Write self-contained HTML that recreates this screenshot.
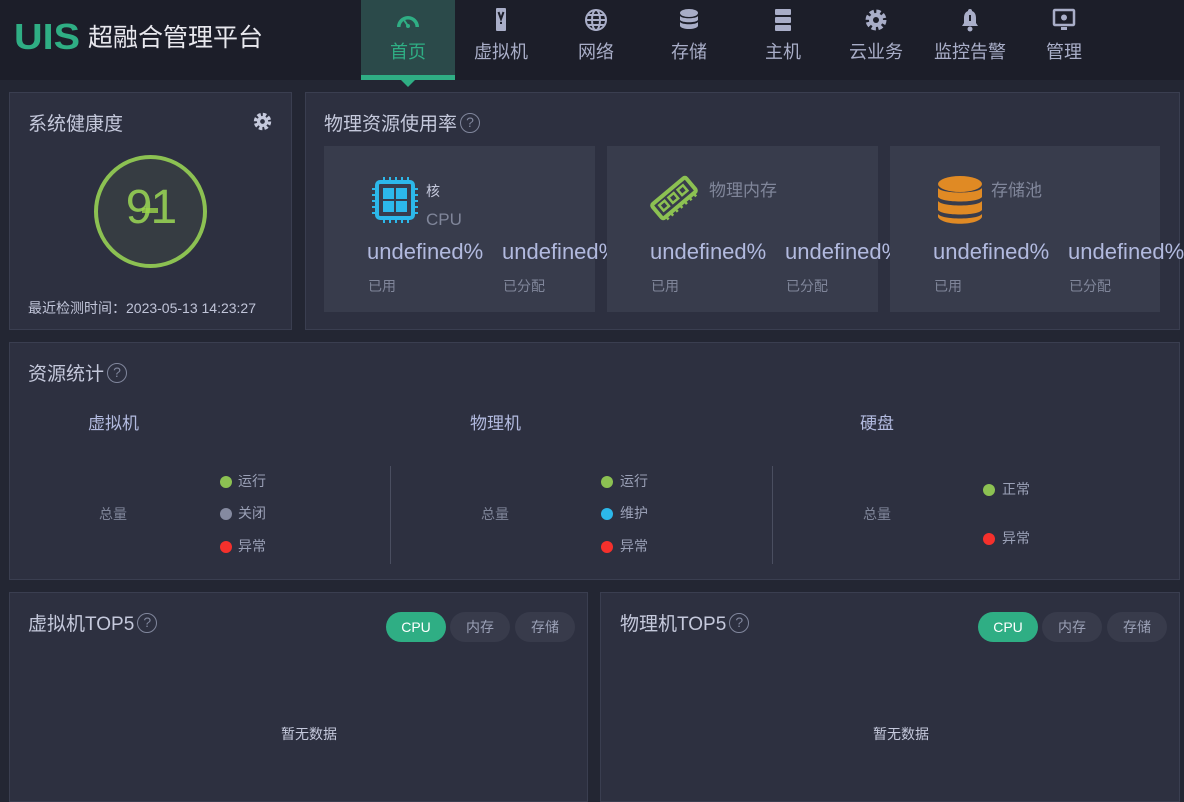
<!DOCTYPE html>
<html><head><meta charset="utf-8"><style>
*{margin:0;padding:0;box-sizing:border-box}
body{width:1184px;height:790px;overflow:hidden;background:#232633;font-family:"Liberation Sans","Noto Sans CJK SC",sans-serif;position:relative;color:#c8cbe0}
.a{position:absolute}
.hdr{left:0;top:0;width:1184px;height:80px;background:#1c1e29}
.nav{top:0;width:94px;height:80px;text-align:center;color:#a9aec8;font-size:18px}
.nav .ic{position:absolute;top:8px;left:35px;width:24px;height:24px}
.nav .t{position:absolute;top:38px;width:100%;left:0}
.panel{background:#2d3040;border:1px solid #3a3e50}
.card{background:#383c4c}
.ttl{font-size:19px;color:#c5c9dc}
.q{display:inline-block;width:20px;height:20px;border:1.5px solid #80869c;border-radius:50%;font-size:14px;line-height:17px;text-align:center;color:#80869c;vertical-align:3px;margin-left:3px}
.big{font-size:22px;color:#b2badf;white-space:nowrap}
.sm{font-size:14px;color:#80869a}
.dot{width:12px;height:12px;border-radius:50%}
.lg{font-size:14px;color:#9aa0b6}
.btn{height:30px;border-radius:15px;font-size:14px;line-height:30px;text-align:center;background:#383b4b;color:#9aa0b6;width:60px}
.btn.on{background:#2fae84;color:#fff}
</style></head><body>
<div class="a hdr"></div>
<div class="a" style="left:14px;top:16px;font-size:36px;font-weight:bold;color:#2fae84;letter-spacing:0px;transform:scaleX(1.1);transform-origin:left">UIS</div>
<div class="a" style="left:88px;top:18px;font-size:25px;color:#e8e8ee">超融合管理平台</div>

<div class="a" style="left:361px;top:0;width:94px;height:80px;background:#2b4a4a"></div>
<div class="a" style="left:361px;top:75px;width:94px;height:5px;background:#2fae84"></div>
<div class="a" style="left:401px;top:80px;width:0;height:0;border-left:7px solid transparent;border-right:7px solid transparent;border-top:7px solid #2fae84"></div>

<div class="a nav" style="left:361px;color:#2fae84"><svg class="ic" viewBox="0 0 24 24"><path d="M1 19a11 11 0 0 1 22 0h-3.5a7.5 7.5 0 0 0-15 0z" fill="#2fae84"/><path d="M12 18l-4-6" stroke="#2fae84" stroke-width="2"/><circle cx="12" cy="18" r="2" fill="#2fae84"/></svg><div class="t">首页</div></div>
<div class="a nav" style="left:454px"><svg class="ic" viewBox="0 0 24 24"><rect x="7" y="0" width="10" height="23" rx="1" fill="#a9aec8"/><path d="M9.5 4l2.5 7 2.5-7" stroke="#1c1e29" stroke-width="2" fill="none"/><rect x="11" y="14" width="2" height="2" fill="#1c1e29"/></svg><div class="t">虚拟机</div></div>
<div class="a nav" style="left:549px"><svg class="ic" viewBox="0 0 24 24" fill="none" stroke="#a9aec8" stroke-width="2"><circle cx="12" cy="12" r="10"/><ellipse cx="12" cy="12" rx="4" ry="10"/><path d="M2 12h20M4 7h16M4 17h16"/></svg><div class="t">网络</div></div>
<div class="a nav" style="left:642px"><svg class="ic" viewBox="0 0 24 24" fill="#a9aec8"><ellipse cx="12" cy="5" rx="9" ry="4"/><path d="M3 8c2 3 16 3 18 0v4c-2 3-16 3-18 0zM3 14c2 3 16 3 18 0v4c-2 4-16 4-18 0z"/></svg><div class="t">存储</div></div>
<div class="a nav" style="left:736px"><svg class="ic" viewBox="0 0 24 24" fill="#a9aec8"><rect x="4" y="1" width="16" height="6" rx="1"/><rect x="4" y="9" width="16" height="6" rx="1"/><rect x="4" y="17" width="16" height="6" rx="1"/></svg><div class="t">主机</div></div>
<div class="a nav" style="left:829px"><svg class="ic" viewBox="0 0 24 24"><circle cx="12" cy="12" r="8" fill="none" stroke="#a9aec8" stroke-width="5" stroke-dasharray="4 2.3"/><circle cx="12" cy="12" r="7" fill="#a9aec8"/><circle cx="12" cy="12" r="3" fill="#1c1e29"/></svg><div class="t">云业务</div></div>
<div class="a nav" style="left:923px"><svg class="ic" viewBox="0 0 24 24" fill="#a9aec8"><path d="M12 1a2 2 0 0 1 2 2c3 1 4 4 4 7v5l2 3H4l2-3v-5c0-3 1-6 4-7a2 2 0 0 1 2-2z"/><circle cx="12" cy="21" r="2.5"/><rect x="11" y="7" width="2" height="6" fill="#1c1e29"/></svg><div class="t">监控告警</div></div>
<div class="a nav" style="left:1017px"><svg class="ic" viewBox="0 0 24 24"><rect x="2" y="2" width="20" height="15" rx="1" fill="none" stroke="#a9aec8" stroke-width="2.5"/><circle cx="12" cy="9.5" r="3" fill="#a9aec8"/><rect x="9" y="19" width="6" height="3" fill="#a9aec8"/></svg><div class="t">管理</div></div>

<!-- health -->
<div class="a panel" style="left:9px;top:92px;width:283px;height:238px"></div>
<div class="a ttl" style="left:28px;top:109px">系统健康度</div>
<svg class="a" style="left:253px;top:112px" width="19" height="19" viewBox="0 0 24 24"><circle cx="12" cy="12" r="8" fill="none" stroke="#c5c9dc" stroke-width="6" stroke-dasharray="4 2.3"/><circle cx="12" cy="12" r="7" fill="#c5c9dc"/><circle cx="12" cy="12" r="3" fill="#2d3040"/></svg>
<div class="a" style="left:94px;top:155px;width:113px;height:113px;border-radius:50%;border:4px solid #8cc152;background:#363c42"></div>
<div class="a" style="left:94px;top:180px;width:113px;text-align:center;font-size:48px;color:#8cc152;letter-spacing:-2px">91</div>
<div class="a" style="left:142px;top:208px;width:16px;height:5px;background:#9bd44a;opacity:.8"></div>
<div class="a" style="left:28px;top:298px;font-size:14px;color:#c0c4d8">最近检测时间：2023-05-13 14:23:27</div>

<!-- physical -->
<div class="a panel" style="left:305px;top:92px;width:875px;height:238px"></div>
<div class="a ttl" style="left:324px;top:109px">物理资源使用率<span class="q">?</span></div>
<div class="a card" style="left:324px;top:146px;width:271px;height:166px"></div>
<div class="a big" style="left:367px;top:239px">undefined%</div><div class="a big" style="left:502px;top:239px">undefined%</div>
<div class="a card" style="left:607px;top:146px;width:271px;height:166px"></div>
<div class="a big" style="left:650px;top:239px">undefined%</div><div class="a big" style="left:785px;top:239px">undefined%</div>
<div class="a card" style="left:890px;top:146px;width:270px;height:166px"></div>
<div class="a big" style="left:933px;top:239px">undefined%</div><div class="a big" style="left:1068px;top:239px">undefined%</div>
<div class="a sm" style="left:368px;top:276px">已用</div><div class="a sm" style="left:503px;top:276px">已分配</div>
<div class="a sm" style="left:651px;top:276px">已用</div><div class="a sm" style="left:786px;top:276px">已分配</div>
<div class="a sm" style="left:934px;top:276px">已用</div><div class="a sm" style="left:1069px;top:276px">已分配</div>

<svg class="a" style="left:372px;top:177px" width="46" height="46" viewBox="0 0 46 46"><rect x="5" y="5" width="36" height="36" rx="3" fill="none" stroke="#2cb8ea" stroke-width="4"/><rect x="11" y="11" width="11" height="11" fill="#2cb8ea"/><rect x="24" y="11" width="11" height="11" fill="#2cb8ea"/><rect x="11" y="24" width="11" height="11" fill="#2cb8ea"/><rect x="24" y="24" width="11" height="11" fill="#2cb8ea"/><path d="M12 0v5M18 0v5M24 0v5M30 0v5M36 0v5M12 41v5M18 41v5M24 41v5M30 41v5M36 41v5M0 12h5M0 18h5M0 24h5M0 30h5M0 36h5M41 12h5M41 18h5M41 24h5M41 30h5M41 36h5" stroke="#2cb8ea" stroke-width="2"/></svg>
<div class="a" style="left:426px;top:181px;font-size:14px;color:#c5c9dc">核</div>
<div class="a" style="left:426px;top:210px;font-size:17px;color:#80869a">CPU</div>
<svg class="a" style="left:648px;top:172px" width="52" height="52" viewBox="0 0 52 52"><g transform="rotate(-40 26 26)"><rect x="4" y="17" width="44" height="18" rx="2" fill="none" stroke="#8cc152" stroke-width="4"/><rect x="10" y="22" width="7" height="7" fill="none" stroke="#8cc152" stroke-width="2.5"/><rect x="22" y="22" width="7" height="7" fill="none" stroke="#8cc152" stroke-width="2.5"/><rect x="34" y="22" width="7" height="7" fill="none" stroke="#8cc152" stroke-width="2.5"/><path d="M8 35v4M14 35v4M20 35v4M26 35v4M32 35v4M38 35v4M44 35v4" stroke="#8cc152" stroke-width="2.5"/></g></svg>
<div class="a" style="left:709px;top:176px;font-size:17px;color:#80869a">物理内存</div>
<svg class="a" style="left:938px;top:176px" width="44" height="48" viewBox="0 0 44 48" fill="#e08a24"><ellipse cx="22" cy="8" rx="22" ry="8"/><path d="M0 12c4 6 40 6 44 0v9c-4 6-40 6-44 0zM0 25c4 6 40 6 44 0v9c-4 6-40 6-44 0zM0 38c4 6 40 6 44 0v3c-4 9-40 9-44 0z"/></svg>
<div class="a" style="left:991px;top:176px;font-size:17px;color:#80869a">存储池</div>

<!-- resources -->
<div class="a panel" style="left:9px;top:342px;width:1171px;height:238px"></div>
<div class="a ttl" style="left:28px;top:359px">资源统计<span class="q">?</span></div>
<div class="a" style="left:88px;top:409px;font-size:17px;color:#b2badf">虚拟机</div>
<div class="a" style="left:470px;top:409px;font-size:17px;color:#b2badf">物理机</div>
<div class="a" style="left:860px;top:409px;font-size:17px;color:#b2badf">硬盘</div>
<div class="a" style="left:390px;top:466px;width:1px;height:98px;background:#4a4e60"></div>
<div class="a" style="left:772px;top:466px;width:1px;height:98px;background:#4a4e60"></div>
<div class="a lg" style="left:99px;top:504px;color:#80869a">总量</div>
<div class="a lg" style="left:481px;top:504px;color:#80869a">总量</div>
<div class="a lg" style="left:863px;top:504px;color:#80869a">总量</div>
<div class="a dot" style="left:220px;top:476px;background:#8cc152"></div><div class="a lg" style="left:238px;top:471px">运行</div>
<div class="a dot" style="left:220px;top:508px;background:#858aa0"></div><div class="a lg" style="left:238px;top:503px">关闭</div>
<div class="a dot" style="left:220px;top:541px;background:#f5302c"></div><div class="a lg" style="left:238px;top:536px">异常</div>
<div class="a dot" style="left:601px;top:476px;background:#8cc152"></div><div class="a lg" style="left:620px;top:471px">运行</div>
<div class="a dot" style="left:601px;top:508px;background:#2cb8ea"></div><div class="a lg" style="left:620px;top:503px">维护</div>
<div class="a dot" style="left:601px;top:541px;background:#f5302c"></div><div class="a lg" style="left:620px;top:536px">异常</div>
<div class="a dot" style="left:983px;top:484px;background:#8cc152"></div><div class="a lg" style="left:1002px;top:479px">正常</div>
<div class="a dot" style="left:983px;top:533px;background:#f5302c"></div><div class="a lg" style="left:1002px;top:528px">异常</div>

<!-- top5 -->
<div class="a panel" style="left:9px;top:592px;width:579px;height:210px"></div>
<div class="a panel" style="left:600px;top:592px;width:580px;height:210px"></div>
<div class="a ttl" style="left:28px;top:609px">虚拟机TOP5<span class="q">?</span></div>
<div class="a ttl" style="left:620px;top:609px">物理机TOP5<span class="q">?</span></div>
<div class="a btn on" style="left:386px;top:612px">CPU</div><div class="a btn" style="left:450px;top:612px">内存</div><div class="a btn" style="left:515px;top:612px">存储</div>
<div class="a btn on" style="left:978px;top:612px">CPU</div><div class="a btn" style="left:1042px;top:612px">内存</div><div class="a btn" style="left:1107px;top:612px">存储</div>
<div class="a" style="left:281px;top:724px;font-size:14px;color:#c5c9dc">暂无数据</div>
<div class="a" style="left:873px;top:724px;font-size:14px;color:#c5c9dc">暂无数据</div>
</body></html>
